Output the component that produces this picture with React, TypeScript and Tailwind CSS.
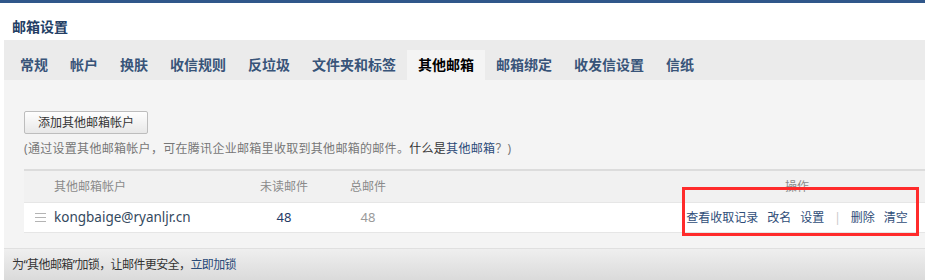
import React from "react";

const tabs = ["常规", "帐户", "换肤", "收信规则", "反垃圾", "文件夹和标签", "其他邮箱", "邮箱绑定", "收发信设置", "信纸"];
const activeTab = "其他邮箱";

function MenuIcon() {
  return (
    <svg width="11" height="9" viewBox="0 0 11 9" className="shrink-0">
      <rect x="0" y="0" width="11" height="1" fill="#b4b4b4" />
      <rect x="0" y="4" width="11" height="1" fill="#b4b4b4" />
      <rect x="0" y="8" width="11" height="1" fill="#b4b4b4" />
    </svg>
  );
}

export default function App() {
  return (
    <div className="relative w-[925px] h-[280px] overflow-hidden bg-white font-['Noto_Sans','Noto_Sans_CJK_SC',sans-serif]">
      <div className="h-[3px] bg-[#30578a]" />
      <div className="h-[37px] pl-[12px] pt-[14px]">
        <h1 className="text-[14px] leading-[20px] font-bold text-[#233e64]">邮箱设置</h1>
      </div>

      <div className="pl-[4px]">
        {/* tabs */}
        <div className="h-[40px] bg-[#ebebeb] flex items-end pl-[5px]">
          {tabs.map((t) => (
            <div
              key={t}
              className={
                t === activeTab
                  ? "h-[30px] leading-[30px] px-[11px] text-[14px] font-bold text-black bg-[#f4f4f4]"
                  : "h-[30px] leading-[30px] px-[11px] text-[14px] font-bold text-[#385479]"
              }
            >
              {t}
            </div>
          ))}
        </div>

        {/* content */}
        <div className="bg-[#f4f4f4] pt-[29px] pl-[20px] pb-[15px]">
          <button className="h-[23px] px-[13px] text-[12px] leading-[21px] text-[#333] border border-[#bdbdbd] rounded-[2px] bg-gradient-to-b from-[#fefefe] to-[#e8e8e8]">
            添加其他邮箱帐户
          </button>
          <p className="mt-[6px] text-[12px] leading-[18px] tracking-[0.3px] text-[#777]">
            (通过设置其他邮箱帐户，可在腾讯企业邮箱里收取到其他邮箱的邮件。
            <span className="text-[#333]">什么是</span>
            <span className="text-[#2b4a78]">其他邮箱</span>？)
          </p>

          <div className="mt-[11px] border-t-2 border-[#dcdcdc]">
            <div className="h-[31px] bg-[#f1f1f1] flex items-center text-[12px] text-[#8a8a8a]">
              <div className="w-[216px] pl-[30px]">其他邮箱帐户</div>
              <div className="w-[88px] text-center">未读邮件</div>
              <div className="w-[80px] text-center">总邮件</div>
              <div className="flex-1" />
              <div className="w-[222px] mr-[17px] text-center">操作</div>
            </div>
            <div className="h-[31px] bg-white border-t border-b border-[#e6e6e6] flex items-center">
              <div className="w-[216px] pl-[11px] flex items-center gap-[8px]">
                <MenuIcon />
                <span className="text-[13.5px] text-[#34495e]">kongbaige@ryanljr.cn</span>
              </div>
              <div className="w-[88px] text-center text-[13px] text-[#1f3a66]">48</div>
              <div className="w-[80px] text-center text-[13px] text-[#9a9a9a]">48</div>
              <div className="flex-1" />
              <div className="w-[222px] mr-[17px] flex items-center justify-center text-[12px] text-[#2f4d78]">
                <span>查看收取记录</span>
                <span className="ml-[9px]">改名</span>
                <span className="ml-[9px]">设置</span>
                <span className="mx-[10px] text-[#c8c8c8]">|</span>
                <span>删除</span>
                <span className="ml-[9px]">清空</span>
              </div>
            </div>
          </div>
        </div>

        {/* footer */}
        <div className="h-[33px] border-t border-[#e0e0e0] bg-gradient-to-b from-[#efefef] to-[#dadada] pl-[8px] flex items-center text-[12px] tracking-[-0.6px] text-[#333]">
          为“其他邮箱”加锁，让邮件更安全，<span className="text-[#2b4a78]">立即加锁</span>
        </div>
      </div>

      {/* highlight annotation */}
      <div className="absolute left-[682px] top-[187px] w-[237px] h-[49px] border-[3px] border-[#ff2b2b]" />
    </div>
  );
}
